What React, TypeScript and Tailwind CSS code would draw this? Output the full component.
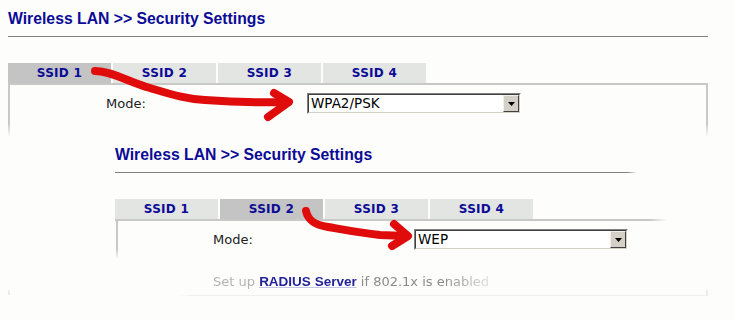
import React from 'react';

// classic windows combo box
function DropArrow() {
  return (
    <div className="flex h-full w-[16px] items-center justify-center border border-t-[#f1efe8] border-l-[#f1efe8] border-b-[#404040] border-r-[#404040] bg-[#d4d0c8]">
      <svg width="7" height="4" viewBox="0 0 7 4">
        <path d="M0 0h7L3.5 4z" fill="#000" />
      </svg>
    </div>
  );
}

function Select({ value }: { value: string }) {
  return (
    <div className="h-[21px] w-[214px] border border-t-[#808080] border-l-[#808080] border-b-white border-r-white">
      <div className="flex h-full items-stretch border border-t-[#404040] border-l-[#404040] border-b-[#d4d0c8] border-r-[#d4d0c8] bg-white">
        <span className="flex-1 pl-[2px] text-[13.5px] leading-[17px] text-black">{value}</span>
        <DropArrow />
      </div>
    </div>
  );
}

function Title() {
  return (
    <h1 className="pt-[10px] font-['Liberation_Sans',Arial,sans-serif] text-[15.75px] font-bold leading-[18px] text-[#0b0b96]">
      Wireless LAN &gt;&gt; Security Settings
    </h1>
  );
}

function Tabs({ active }: { active: number }) {
  return (
    <div className="flex gap-[2px]">
      {[1, 2, 3, 4].map((n) => (
        <div
          key={n}
          className={`h-[20px] w-[103px] text-center text-[12px] font-bold leading-[20px] tracking-[0.3px] text-[#0b0b96] ${
            n === active ? 'bg-[#c3c4c3]' : 'bg-[#e3e5e3]'
          }`}
        >
          SSID {n}
        </div>
      ))}
    </div>
  );
}

function ModeRow({ value }: { value: string }) {
  return (
    <div className="flex items-center">
      <span className="w-[201px] text-[13px] leading-[16px] text-[#222]">Mode:</span>
      <Select value={value} />
    </div>
  );
}

export default function App() {
  return (
    <div className="relative h-[320px] w-[734px] overflow-hidden bg-[#fdfdfb] font-['DejaVu_Sans',Verdana,sans-serif]">
      {/* first screenshot */}
      <div className="pl-[8px] pr-[26px]">
        <Title />
        <div className="mt-[8px] h-px bg-[#808080]" />
        <div className="mt-[26px]">
          <Tabs active={1} />
        </div>
        <div className="h-[2px] bg-[#c8c8c6]" />
        <div className="flex h-[210px]">
          <div className="w-[2px] bg-[linear-gradient(to_bottom,#c8c8c6_38px,transparent_52px,transparent_204px,#ecece9_206px)]" />
          <div className="flex-1 pl-[96px] pt-[8px]">
            <ModeRow value="WPA2/PSK" />
          </div>
          <div className="w-[2px] bg-[linear-gradient(to_bottom,#c8c8c6_38px,transparent_52px,transparent_204px,#ecece9_206px)]" />
        </div>
        <div className="h-px bg-[linear-gradient(to_right,transparent_170px,#efefed_185px)]" />
      </div>

      {/* second screenshot pasted over the first */}
      <div className="absolute left-[107px] top-[136px] w-[600px] pl-[8px]">
        <Title />
        <div className="mt-[8px] h-px w-[522px] bg-[linear-gradient(to_right,#808080_512px,transparent)]" />
        <div className="mt-[26px]">
          <Tabs active={2} />
        </div>
        <div className="h-[2px] w-[552px] bg-[linear-gradient(to_right,#c8c8c6_535px,transparent)]" />
        <div className="flex">
          <div className="ml-px h-[40px] w-[2px] bg-[linear-gradient(to_bottom,#c8c8c6_28px,transparent_38px)]" />
          <div className="pl-[95px] pt-[8px]">
            <ModeRow value="WEP" />
            <p className="mt-[24px] whitespace-nowrap text-[13px] leading-[16px] text-[#b4b4b4] [mask-image:linear-gradient(to_right,black_230px,transparent_290px)]">
              Set up{' '}
              <span className="font-['Liberation_Sans',Arial,sans-serif] text-[13.5px] font-bold text-[#24249a] underline decoration-[#c4c4e4]">
                RADIUS Server
              </span>{' '}
              <span className="text-[#8a8a8a]">if 802.1x is enabled</span>
            </p>
          </div>
        </div>
      </div>

      {/* hand drawn arrows */}
      <svg className="pointer-events-none absolute inset-0" width="734" height="320" viewBox="0 0 734 320">
        <g fill="none" stroke="#e00b0b" strokeWidth="8" strokeLinecap="round" strokeLinejoin="round">
          <path d="M95 71C112 71 128 82 150 88C170 94 185 99 205 100C230 102 255 103 287 102" />
          <path d="M274 93L289 102L268 117" />
          <path d="M306 211C308 220 314 225 328 227C345 230 360 233 380 235L406 236" />
          <path d="M394 224L408 236L392 246" />
        </g>
      </svg>
    </div>
  );
}
